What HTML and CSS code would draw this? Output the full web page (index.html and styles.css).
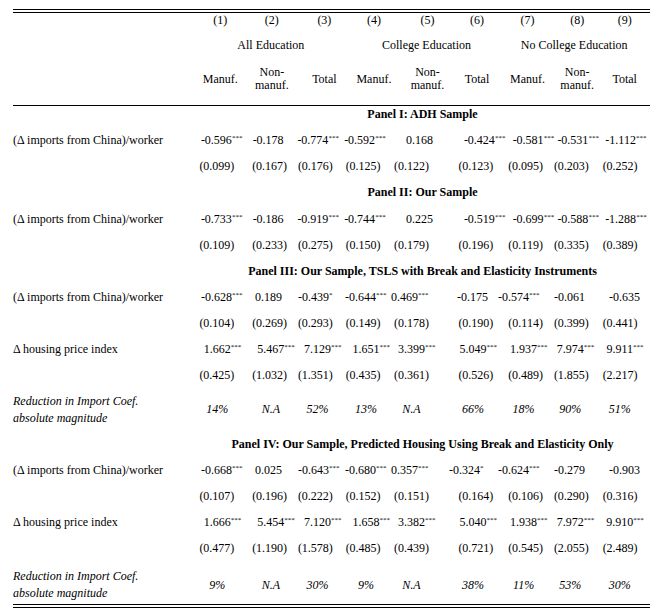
FILE: index.html
```html
<!DOCTYPE html>
<html>
<head>
<meta charset="utf-8">
<link rel="stylesheet" href="styles.css">
</head>
<body>
<div class="tbl">
  <div class="rule2 top"></div>
  <div class="row hnum h"><span></span><span>(1)</span><span>(2)</span><span>(3)</span><span>(4)</span><span>(5)</span><span>(6)</span><span>(7)</span><span>(8)</span><span>(9)</span></div>
  <div class="row hgrp"><span></span><span class="g">All Education</span><span class="g">College Education</span><span class="g">No College Education</span></div>
  <div class="row hsub h"><span></span><span>Manuf.</span><span>Non-<br>manuf.</span><span>Total</span><span>Manuf.</span><span>Non-<br>manuf.</span><span>Total</span><span>Manuf.</span><span>Non-<br>manuf.</span><span>Total</span></div>

  <div class="row panel first"><span></span><span class="pt">Panel I: ADH Sample</span></div>
  <div class="row coef d"><span class="lab">(Δ imports from China)/worker</span><span>-0.596<sup>***</sup></span><span>-0.178</span><span>-0.774<sup>***</sup></span><span>-0.592<sup>***</sup></span><span class="ns">0.168</span><span>-0.424<sup>***</sup></span><span>-0.581<sup>***</sup></span><span>-0.531<sup>***</sup></span><span>-1.112<sup>***</sup></span></div>
  <div class="row se d"><span class="lab"></span><span>(0.099)</span><span>(0.167)</span><span>(0.176)</span><span>(0.125)</span><span>(0.122)</span><span>(0.123)</span><span>(0.095)</span><span>(0.203)</span><span>(0.252)</span></div>

  <div class="row panel p2"><span></span><span class="pt">Panel II: Our Sample</span></div>
  <div class="row coef d"><span class="lab">(Δ imports from China)/worker</span><span>-0.733<sup>***</sup></span><span>-0.186</span><span>-0.919<sup>***</sup></span><span>-0.744<sup>***</sup></span><span class="ns">0.225</span><span>-0.519<sup>***</sup></span><span>-0.699<sup>***</sup></span><span>-0.588<sup>***</sup></span><span>-1.288<sup>***</sup></span></div>
  <div class="row se d"><span class="lab"></span><span>(0.109)</span><span>(0.233)</span><span>(0.275)</span><span>(0.150)</span><span>(0.179)</span><span>(0.196)</span><span>(0.119)</span><span>(0.335)</span><span>(0.389)</span></div>

  <div class="row panel"><span></span><span class="pt">Panel III: Our Sample, TSLS with Break and Elasticity Instruments</span></div>
  <div class="row coef d"><span class="lab">(Δ imports from China)/worker</span><span>-0.628<sup>***</sup></span><span>0.189</span><span>-0.439<sup>*</sup></span><span>-0.644<sup>***</sup></span><span>0.469<sup>***</sup></span><span class="ns">-0.175</span><span>-0.574<sup>***</sup></span><span class="ns">-0.061</span><span class="ns">-0.635</span></div>
  <div class="row se d"><span class="lab"></span><span>(0.104)</span><span>(0.269)</span><span>(0.293)</span><span>(0.149)</span><span>(0.178)</span><span>(0.190)</span><span>(0.114)</span><span>(0.399)</span><span>(0.441)</span></div>
  <div class="row coef d"><span class="lab">Δ housing price index</span><span>1.662<sup>***</sup></span><span>5.467<sup>***</sup></span><span>7.129<sup>***</sup></span><span>1.651<sup>***</sup></span><span>3.399<sup>***</sup></span><span>5.049<sup>***</sup></span><span>1.937<sup>***</sup></span><span>7.974<sup>***</sup></span><span>9.911<sup>***</sup></span></div>
  <div class="row se d"><span class="lab"></span><span>(0.425)</span><span>(1.032)</span><span>(1.351)</span><span>(0.435)</span><span>(0.361)</span><span>(0.526)</span><span>(0.489)</span><span>(1.855)</span><span>(2.217)</span></div>
  <div class="row red d"><span class="lab">Reduction in Import Coef.<br>absolute magnitude</span><span>14%</span><span>N.A</span><span>52%</span><span>13%</span><span>N.A</span><span>66%</span><span>18%</span><span>90%</span><span>51%</span></div>

  <div class="row panel"><span></span><span class="pt">Panel IV: Our Sample, Predicted Housing Using Break and Elasticity Only</span></div>
  <div class="row coef d"><span class="lab">(Δ imports from China)/worker</span><span>-0.668<sup>***</sup></span><span>0.025</span><span>-0.643<sup>***</sup></span><span>-0.680<sup>***</sup></span><span>0.357<sup>***</sup></span><span>-0.324<sup>*</sup></span><span>-0.624<sup>***</sup></span><span class="ns">-0.279</span><span class="ns">-0.903</span></div>
  <div class="row se d"><span class="lab"></span><span>(0.107)</span><span>(0.196)</span><span>(0.222)</span><span>(0.152)</span><span>(0.151)</span><span>(0.164)</span><span>(0.106)</span><span>(0.290)</span><span>(0.316)</span></div>
  <div class="row coef d"><span class="lab">Δ housing price index</span><span>1.666<sup>***</sup></span><span>5.454<sup>***</sup></span><span>7.120<sup>***</sup></span><span>1.658<sup>***</sup></span><span>3.382<sup>***</sup></span><span>5.040<sup>***</sup></span><span>1.938<sup>***</sup></span><span>7.972<sup>***</sup></span><span>9.910<sup>***</sup></span></div>
  <div class="row se d"><span class="lab"></span><span>(0.477)</span><span>(1.190)</span><span>(1.578)</span><span>(0.485)</span><span>(0.439)</span><span>(0.721)</span><span>(0.545)</span><span>(2.055)</span><span>(2.489)</span></div>
  <div class="row red d last"><span class="lab">Reduction in Import Coef.<br>absolute magnitude</span><span>9%</span><span>N.A</span><span>30%</span><span>9%</span><span>N.A</span><span>38%</span><span>11%</span><span>53%</span><span>30%</span></div>
  <div class="rule2 bottom"></div>
</div>
</body>
</html>
```

FILE: styles.css
```css
html, body {
  margin: 0;
  padding: 0;
  background: #ffffff;
}
body {
  font-family: "Liberation Serif", "Times New Roman", serif;
  font-size: 12px;
  color: #000;
}
.tbl {
  width: 637px;
  margin-left: 13px;
}
.rule2 {
  height: 2px;
  border-top: 1px solid #000;
  border-bottom: 1px solid #000;
}
.rule2.top { margin-top: 9px; }
.rule2.bottom { margin-top: 2px; }

.row {
  display: grid;
  grid-template-columns: 182px repeat(9, 1fr);
  align-items: center;
}
.row > span {
  text-align: center;
  white-space: nowrap;
}
.row > span.lab { text-align: left; }

/* header column offsets */
.h > span:nth-child(3) { padding-left: 2px; }
.h > span:nth-child(4) { padding-left: 6px; }
.h > span:nth-child(5) { padding-left: 4px; }
.h > span:nth-child(6) { padding-left: 10px; }
.h > span:nth-child(7) { padding-left: 8px; }
.h > span:nth-child(8) { padding-left: 8px; }
.h > span:nth-child(9) { padding-left: 6px; }

/* data column offsets */
.d > span:nth-child(2) { padding-right: 6px; }
.d > span:nth-child(4) { padding-right: 8px; }
.d > span:nth-child(5) { padding-right: 12px; }
.d > span:nth-child(6) { padding-right: 22px; }
.d > span:nth-child(9) { padding-right: 8px; }
.d > span:nth-child(10) { padding-right: 10px; }
.d > span.ns { padding-left: 16px; }

.hnum { line-height: 14px; padding-bottom: 5px; }
.hgrp { line-height: 26px; }
.hgrp .g { grid-column: span 3; }
.hgrp .g:nth-child(3) { padding-left: 8px; }
.hsub {
  height: 42px;
  line-height: 13px;
  padding-bottom: 5px;
  border-bottom: 1px solid #000;
}

.panel { line-height: 26px; }
.panel.first { line-height: 16px; padding-bottom: 5px; }
.panel.p2 { line-height: 27px; }
.panel .pt { grid-column: 2 / -1; font-weight: bold; }

.coef, .se { line-height: 26px; }

sup {
  display: inline-block;
  width: 0;
  font-size: 7px;
  line-height: 1;
  vertical-align: 4px;
  text-align: left;
}

.red {
  height: 43px;
  font-style: italic;
}
.red .lab { line-height: 17px; }
.red.last {
  height: 34px;
  padding-top: 7px;
}
```
